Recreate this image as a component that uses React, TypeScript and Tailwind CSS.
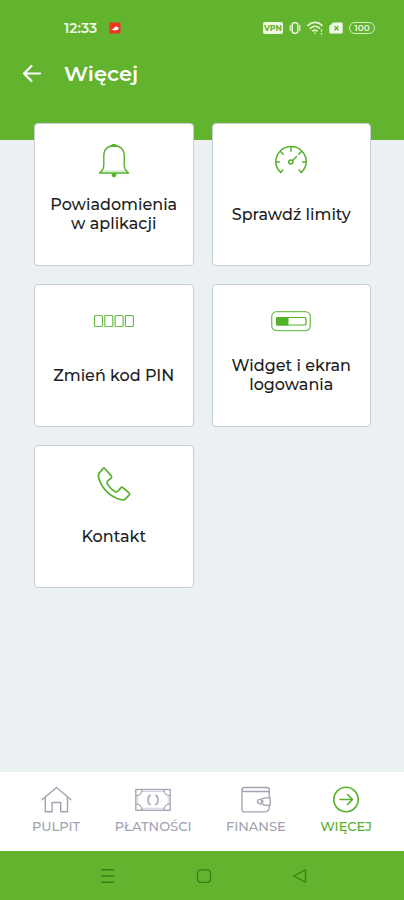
import type { ReactNode } from "react";

type Tile = { label: string; icon: ReactNode };
type Tab = { label: string; icon: ReactNode; active?: boolean };

function BellIcon() {
  return (
    <svg className="h-9 w-8" viewBox="0 0 32 36" fill="none" stroke="currentColor" strokeWidth="1.4" strokeLinejoin="round" aria-hidden>
      <path d="M16 3.500C10 3.500 5.800 7.500 5.800 13.500V23c0 3-1.300 5.500-4.300 8h29c-3-2.500-4.300-5-4.300-8v-9.500c0-6-4.200-10-10.200-10z" />
      <path d="M3.500 29h25" strokeWidth=".8" opacity=".5" />
      <path d="M13.800 4.200a2.300 2.500 0 0 1 4.400 0z" fill="currentColor" />
      <path d="M14.300 32a1.700 2.600 0 0 0 3.400 0z" fill="currentColor" />
    </svg>
  );
}

function GaugeIcon() {
  return (
    <svg className="h-8 w-8" viewBox="0 0 32 32" fill="none" stroke="currentColor" strokeWidth="1.500" strokeLinecap="round" strokeLinejoin="round" aria-hidden>
      <path d="m3.500 26 2.300 2.500 2-2.500M5.800 28.500C2.500 25.500 .8 22 .8 17.800.8 9.200 7.600 2.500 16 2.500s15.200 6.700 15.200 15.300c0 4.200-1.700 7.700-5 10.700l-2-2.500M26.200 28.500l2.300-2.500" />
      <path d="M16 3v4M5.500 7.500l2.800 2.800M26.500 7.500l-2.800 2.800M.8 18h3.500M31.200 18h-3.500M17.500 16.500l4-4" />
      <circle cx="15.800" cy="18" r="2" strokeWidth="1.600" />
    </svg>
  );
}

function PinIcon() {
  return (
    <svg className="h-4 w-11" viewBox="0 0 44 16" fill="none" stroke="currentColor" strokeWidth="1.200" opacity=".85" aria-hidden>
      <rect x="2.500" y="2.500" width="8" height="11" rx="1" />
      <rect x="12.800" y="2.500" width="8" height="11" rx="1" />
      <rect x="23.100" y="2.500" width="8" height="11" rx="1" />
      <rect x="33.400" y="2.500" width="8" height="11" rx="1" />
    </svg>
  );
}

function WidgetIcon() {
  return (
    <svg className="h-6 w-10" viewBox="0 0 40 24" fill="none" stroke="currentColor" aria-hidden>
      <rect x=".7" y="2.700" width="38.600" height="19" rx="5" strokeWidth="1.300" opacity=".8" />
      <rect x="5.500" y="8.500" width="29.500" height="7.500" rx="1" strokeWidth="1.200" />
      <rect x="5" y="8" width="12.500" height="8.500" rx="1" fill="currentColor" stroke="none" />
    </svg>
  );
}

function PhoneIcon() {
  return (
    <svg className="h-10 w-9" viewBox="0 0 36 40" fill="none" stroke="currentColor" strokeWidth="1.700" strokeLinejoin="round" aria-hidden>
      <path d="M8.600 6.300 15.300 14c.5.600.5 1.300 0 1.900l-3.800 3.300c-.8.900-.8 1.700-.1 2.900 2 3.300 4.300 5.500 7.500 7.300 1.200.7 2 .7 2.900-.1l3.300-3.700c.5-.5 1.200-.5 1.800 0l6.300 5.600c.6.500.6 1.100.1 1.700l-3.500 3.700c-1.200 1.300-3.300 1.500-5.400.900C14 34.500 5.700 26.500 2.700 16c-.7-2.500-.4-4 .8-5.300l3.600-4.300c.4-.5 1-.6 1.500-.1z" />
    </svg>
  );
}

function HomeIcon() {
  return (
    <svg className="h-8 w-8" viewBox="0 0 32 32" fill="none" stroke="currentColor" strokeWidth="1.400" strokeLinecap="round" strokeLinejoin="round" aria-hidden>
      <path d="M2 15.800 16.500 3.500 31 15.800" />
      <path d="M5.300 13.500v14.300h6.800V18.500h8.600v9.300h6.800V13.500" />
    </svg>
  );
}

function BanknoteIcon() {
  return (
    <svg className="h-8 w-9" viewBox="0 0 36 32" fill="none" stroke="currentColor" strokeWidth="1.300" strokeLinecap="round" aria-hidden>
      <rect x=".8" y="5.500" width="34.400" height="20.800" />
      <path d="M7.300 7.500h21.400M7.300 24.300h21.400M2.800 12v8M33.200 12v8" strokeWidth=".5" />
      <path d="M7 5.700c0 3.700-2.500 6-6 6M29 5.700c0 3.700 2.500 6 6 6M7 26.100c0-3.700-2.500-6-6-6M29 26.100c0-3.700 2.500-6 6-6" />
      <path d="M15.300 11.200c-3 1.500-3 8 0 9.500M20.700 11.200c3 1.500 3 8 0 9.500" strokeWidth="1.500" />
    </svg>
  );
}

function WalletIcon() {
  return (
    <svg className="h-8 w-8" viewBox="0 0 32 32" fill="none" stroke="currentColor" strokeWidth="1.300" strokeLinecap="round" strokeLinejoin="round" aria-hidden>
      <path d="M29.300 14V9.500c0-1.200-.8-2-2-2H5C3 7.500 2 6.800 2 5.500M29.300 21v2c0 3-1.700 4.800-4.500 4.800H4.200C2.800 27.800 2 27 2 25.600V6c0-1.700 1-2.500 2.500-2.500h22c1.700 0 2.800.8 2.800 2.500v4" />
      <path d="M30.200 13.800h-5.500c-1.500 1.500-3.500 1.200-5 1.500-3 .5-3 4 0 4.500 1.500.3 3.500 0 5 1.500h5.500z" />
      <circle cx="22" cy="17.500" r="1" />
    </svg>
  );
}

function MoreIcon() {
  return (
    <svg className="h-8 w-8" viewBox="0 0 32 32" fill="none" stroke="currentColor" strokeWidth="1.600" strokeLinecap="round" strokeLinejoin="round" aria-hidden>
      <circle cx="16" cy="15.500" r="12.200" />
      <path d="M10 15.500h12.500M17.500 10.500l5 5-5 5" />
    </svg>
  );
}

function StatusBar() {
  return (
    <div className="flex h-14 items-center justify-between pr-[29px] pl-16 text-white">
      <div className="flex items-center gap-3">
        <span className="text-sm font-semibold text-[#eef8e6]">12:33</span>
        <svg className="h-3 w-3" viewBox="0 0 12 12" aria-hidden>
          <rect x=".5" y=".5" width="11" height="11" rx="1" fill="#ef3322" />
          <path d="M2 6.800c1 .7 2 .4 2.800-.6C5.600 5 6.500 4.200 7.500 4.500c.9.300.8 1 2.500 1.300-.5 1.700-1.800 2.700-3.700 2.700C4.300 8.500 2.800 8 2 6.800z" fill="#fff" />
        </svg>
      </div>
      <div className="flex items-center gap-1.5">
        <span className="flex h-3 w-5 items-center justify-center rounded-xs bg-[#eef8e6] text-[8px] font-bold text-[#62b32e]">
          VPN
        </span>
        <svg className="h-3 w-3" viewBox="0 0 12 12" fill="none" stroke="#e6f5d8" strokeWidth="1.600" aria-hidden>
          <rect x="3.200" y=".8" width="5.600" height="10.400" rx="2.200" />
          <path d="M1.200 3v6M10.800 3v6" strokeWidth="1.200" />
        </svg>
        <svg className="h-3.5 w-4" viewBox="0 0 16 14" fill="none" stroke="#e6f5d8" strokeWidth="1.800" strokeLinecap="round" aria-hidden>
          <path d="M1 4.300c4-3.800 10-3.800 14 0M3.500 7.200c2.700-2.500 6.300-2.500 9 0M6 9.900c1.200-1 2.800-1 4 0" />
          <path d="M8 12v.5M14.500 9v1M14.500 12.500v.5" strokeWidth="1.400" />
        </svg>
        <svg className="h-3 w-3.5" viewBox="0 0 14 12" aria-hidden>
          <path d="M4 .5h8.500a1.200 1.200 0 0 1 1.200 1.200v8.600a1.200 1.200 0 0 1-1.200 1.200h-11A1.200 1.200 0 0 1 .3 10.300V4z" fill="#eef8e6" />
          <path d="m5.500 4.200 4 4M9.500 4.200l-4 4" stroke="#62b32e" strokeWidth="1.400" />
        </svg>
        <span className="flex h-3 w-[26px] items-center justify-center rounded-full border border-[#d4edc0] text-[9px] font-semibold text-[#e6f5d8]">
          100
        </span>
      </div>
    </div>
  );
}

const tiles: Tile[] = [
  { label: "Powiadomienia w aplikacji", icon: <BellIcon /> },
  { label: "Sprawdź limity", icon: <GaugeIcon /> },
  { label: "Zmień kod PIN", icon: <PinIcon /> },
  { label: "Widget i ekran logowania", icon: <WidgetIcon /> },
  { label: "Kontakt", icon: <PhoneIcon /> },
];

const tabs: Tab[] = [
  { label: "PULPIT", icon: <HomeIcon /> },
  { label: "PŁATNOŚCI", icon: <BanknoteIcon /> },
  { label: "FINANSE", icon: <WalletIcon /> },
  { label: "WIĘCEJ", icon: <MoreIcon />, active: true },
];

export default function App() {
  return (
    <div className="flex min-h-screen flex-col bg-[#ebf0f3] font-['Montserrat','Inter',sans-serif]">
      <header className="bg-[#62b32e] pb-12">
        <StatusBar />
        <div className="flex h-9 items-center gap-5 px-5 text-white">
          <button type="button" aria-label="Wstecz">
            <svg className="h-6 w-6" viewBox="0 0 24 24" fill="none" stroke="currentColor" strokeWidth="2.200" strokeLinecap="round" strokeLinejoin="round" aria-hidden>
              <path d="M20 11.500H4M11.500 4 4 11.500l7.500 7.500" />
            </svg>
          </button>
          <h1 className="text-[21px] leading-8 font-semibold">Więcej</h1>
        </div>
      </header>

      <main className="-mt-[17px] grow pr-[33px] pb-6 pl-[34px]">
        <div className="grid grid-cols-2 gap-[18px]">
          {tiles.map((tile) => (
            <button
              key={tile.label}
              type="button"
              className="flex min-h-[143px] flex-col items-center gap-3.5 rounded border border-[#c9cdd6] bg-white px-3 pt-4"
            >
              <span className="flex h-10 items-center text-[#55b02a]">{tile.icon}</span>
              <span className="flex min-h-10 items-center text-base leading-[19px] font-medium text-[#1c1c1c]">
                {tile.label}
              </span>
            </button>
          ))}
        </div>
      </main>

      <nav className="flex h-[79px] items-start justify-between bg-white px-8 pt-3">
        {tabs.map((tab) => (
          <a
            key={tab.label}
            href="#"
            aria-current={tab.active ? "page" : undefined}
            className={`flex flex-col items-center text-[13px] leading-5 font-medium ${
              tab.active ? "text-[#55b02a]" : "text-[#a0a3b2]"
            }`}
          >
            {tab.icon}
            {tab.label}
          </a>
        ))}
      </nav>

      <div className="flex h-[49px] items-center justify-center gap-20 bg-[#62b32e] pl-1 text-[#3c7d17]">
        <button type="button" aria-label="Ostatnie aplikacje">
          <svg className="h-4 w-4" viewBox="0 0 16 16" fill="none" stroke="currentColor" strokeWidth="1.500" aria-hidden>
            <path d="M1 1.800h13M1 8h13M1 14.200h13" />
          </svg>
        </button>
        <button type="button" aria-label="Ekran główny">
          <svg className="h-4 w-4" viewBox="0 0 16 16" fill="none" stroke="currentColor" strokeWidth="1.300" aria-hidden>
            <rect x="1.500" y="1.800" width="13" height="12.500" rx="3" />
          </svg>
        </button>
        <button type="button" aria-label="Cofnij">
          <svg className="h-4 w-4" viewBox="0 0 16 16" fill="none" stroke="currentColor" strokeWidth="1.300" strokeLinejoin="round" aria-hidden>
            <path d="M13.500 1.800v12.400L1.800 8z" />
          </svg>
        </button>
      </div>
    </div>
  );
}
